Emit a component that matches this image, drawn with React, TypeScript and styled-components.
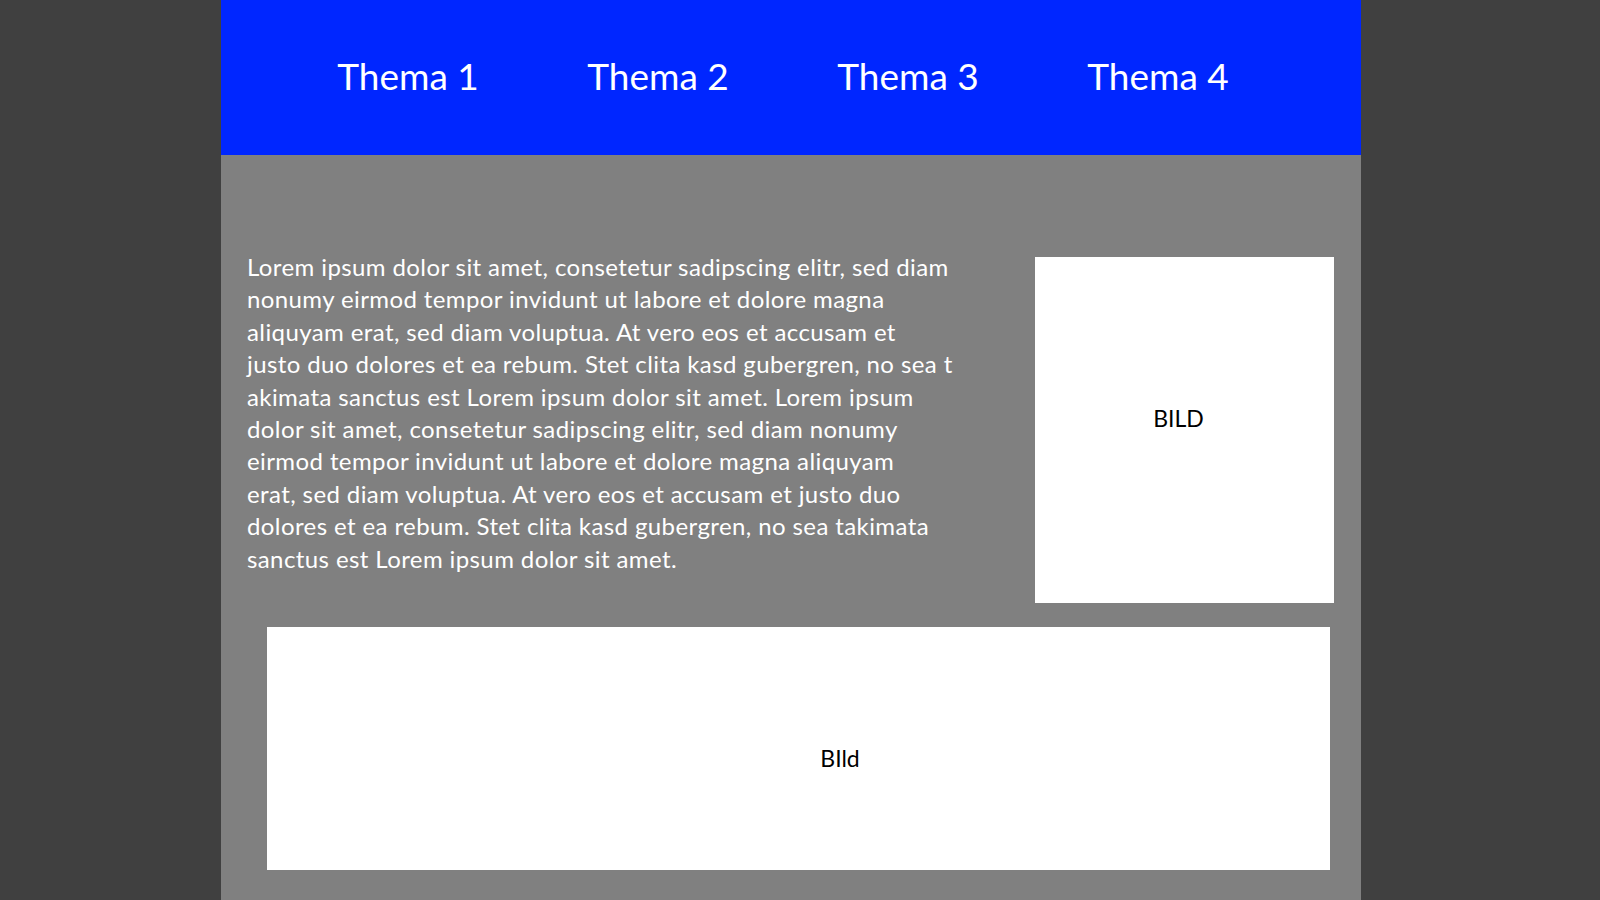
import React from "react";
import styled, { createGlobalStyle } from "styled-components";

const GlobalStyle = createGlobalStyle`
  html, body {
    margin: 0;
    padding: 0;
    background: #404040;
    height: 100%;
    overflow: hidden;
  }
  body {
    font-family: Lato, "Liberation Sans", sans-serif;
  }
`;

const Slide = styled.div`
  width: 1140px;
  height: 900px;
  margin-left: 221px;
  background: #808080;
  display: flex;
  flex-direction: column;
`;

const NavBar = styled.nav`
  height: 155px;
  background: #0026ff;
  display: flex;
  align-items: flex-start;
  padding: 53px 0 0 62px;
  box-sizing: border-box;
  flex-shrink: 0;
`;

const NavItem = styled.a`
  width: 250px;
  text-align: center;
  color: #ffffff;
  font-family: Lato, "Liberation Sans", sans-serif;
  font-size: 37px;
  line-height: normal;
  text-decoration: none;
  cursor: pointer;
`;

const Content = styled.main`
  display: flex;
  flex-direction: column;
  padding-top: 96px;
`;

const TopRow = styled.section`
  display: flex;
  justify-content: space-between;
  align-items: flex-start;
  padding: 0 27px 0 26px;
`;

const Paragraph = styled.p`
  margin: 0;
  color: #ffffff;
  font-family: Lato, "Liberation Sans", sans-serif;
  font-size: 24px;
  letter-spacing: 0.4px;
  line-height: 32.4px;
`;

const Line = styled.span`
  display: block;
  white-space: nowrap;
`;

const ImageBox = styled.div<{ $w?: string; $h: number; $pad: string; $mt: number; $ml?: number; $mr?: number }>`
  width: ${(p) => p.$w ?? "auto"};
  height: ${(p) => p.$h}px;
  margin: ${(p) => `${p.$mt}px ${p.$mr ?? 0}px 0 ${p.$ml ?? 0}px`};
  background: #ffffff;
  display: flex;
  align-items: center;
  justify-content: center;
  padding: ${(p) => p.$pad};
  box-sizing: border-box;
  flex-shrink: 0;
  color: #000000;
  font-family: Lato, "Liberation Sans", sans-serif;
  font-size: 23px;
  line-height: normal;
`;

const topics = ["Thema 1", "Thema 2", "Thema 3", "Thema 4"];

const lines = [
  "Lorem ipsum dolor sit amet, consetetur sadipscing elitr, sed diam",
  "nonumy eirmod tempor invidunt ut labore et dolore magna",
  "aliquyam erat, sed diam voluptua. At vero eos et accusam et",
  "justo duo dolores et ea rebum. Stet clita kasd gubergren, no sea t",
  "akimata sanctus est Lorem ipsum dolor sit amet. Lorem ipsum",
  "dolor sit amet, consetetur sadipscing elitr, sed diam nonumy",
  "eirmod tempor invidunt ut labore et dolore magna aliquyam",
  "erat, sed diam voluptua. At vero eos et accusam et justo duo",
  "dolores et ea rebum. Stet clita kasd gubergren, no sea takimata",
  "sanctus est Lorem ipsum dolor sit amet.",
];

export default function App() {
  return (
    <>
      <GlobalStyle />
      <Slide>
        <NavBar>
          {topics.map((t) => (
            <NavItem key={t}>{t}</NavItem>
          ))}
        </NavBar>
        <Content>
          <TopRow>
            <Paragraph>
              {lines.map((l, i) => (
                <Line key={i}>{l}</Line>
              ))}
            </Paragraph>
            <ImageBox $w="299px" $h={346} $mt={6} $pad="0 12px 24px 0">
              BILD
            </ImageBox>
          </TopRow>
          <ImageBox $h={243} $mt={24} $ml={46} $mr={31} $pad="18px 0 0 83px">
            BIld
          </ImageBox>
        </Content>
      </Slide>
    </>
  );
}
